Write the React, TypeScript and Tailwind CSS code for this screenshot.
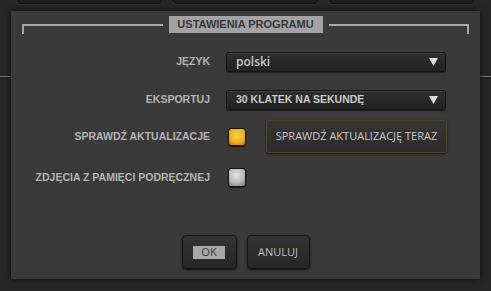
import React from 'react';

const labelCls =
    "text-right text-[10.5px] font-bold text-[#b4b4b4] [font-family:'Liberation_Sans',Arial,sans-serif] whitespace-nowrap";

const Select: React.FC<{ value: string; bold?: boolean }> = ({ value, bold }) => (
    <div className="flex h-[20px] w-[220px] items-center justify-between rounded-[3px] border border-[#141414] bg-gradient-to-b from-[#2e2e2e] to-[#232323] pl-[9px] pr-[7px] shadow-[inset_0_1px_0_rgba(255,255,255,0.08),0_1px_1px_rgba(0,0,0,0.5)]">
        <span className={`text-[#c8c8c8] ${bold ? 'text-[10.5px] font-bold [font-family:Liberation_Sans,Arial,sans-serif]' : 'text-[12px] font-semibold'}`}>{value}</span>
        <svg width="9" height="8" viewBox="0 0 9 8">
            <path d="M0 0 H9 L4.5 8 Z" fill="#dcdcdc" />
        </svg>
    </div>
);

export default function App() {
    return (
        <div className="relative h-[291px] w-[491px] overflow-hidden bg-[#262626] [font-family:'Open_Sans','Liberation_Sans',sans-serif]">
            {/* line running behind the dialog */}
            <div className="absolute left-0 right-0 top-[76px] h-[1px] bg-[#7a7a7a]" />
            <div className="absolute left-0 right-0 top-[77px] h-[1px] bg-[#151515]" />

            {/* top toolbar buttons (cut off) */}
            <div className="relative flex gap-[11px] pl-[17px]">
                {[0, 1, 2].map((i) => (
                    <div
                        key={i}
                        className="mt-[-12px] h-[16px] w-[145px] rounded-b-[4px] border border-[#111] bg-[#1f1f1f] shadow-[0_1px_0_rgba(255,255,255,0.06)]"
                    />
                ))}
            </div>

            {/* dialog panel */}
            <div className="relative ml-[11px] mt-[7px] flex h-[268px] w-[469px] flex-col bg-[#3a3a3a] shadow-[0_0_6px_rgba(0,0,0,0.7)]">
                {/* fieldset title */}
                <div className="mx-[11px] mt-[5px] flex h-[17px] items-start gap-[6px]">
                    <div className="mt-[8px] h-[10px] flex-1 border-l-2 border-t-2 border-[#a8a8a8]" />
                    <div className="flex h-[17px] w-[154px] items-center justify-center bg-[#a3a3a3] text-[11px] font-bold text-[#383838] [font-family:'Liberation_Sans',Arial,sans-serif]">
                        USTAWIENIA PROGRAMU
                    </div>
                    <div className="mt-[8px] h-[10px] flex-1 border-r-2 border-t-2 border-[#a8a8a8]" />
                </div>

                {/* settings rows */}
                <div className="mt-[19px] grid grid-cols-[199px_auto] gap-x-[16px]">
                    <div className={`${labelCls} self-center`}>JĘZYK</div>
                    <Select value="polski" />

                    <div className={`${labelCls} mt-[18px] self-center`}>EKSPORTUJ</div>
                    <div className="mt-[18px]">
                        <Select value="30 KLATEK NA SEKUNDĘ" bold />
                    </div>

                    <div className={`${labelCls} mt-[10px] self-center`}>SPRAWDŹ AKTUALIZACJE</div>
                    <div className="mt-[10px] flex items-center">
                        <div className="ml-[2px] h-[18px] w-[18px] rounded-[3px] border border-[#1a1205] bg-[radial-gradient(circle_at_50%_40%,#ffd040,#f0b020_55%,#c07a10)] shadow-[0_1px_1px_rgba(0,0,0,0.6)]" />
                        <button className="ml-[20px] flex h-[33px] w-[181px] items-center justify-center rounded-[3px] border border-[#4e4528] bg-gradient-to-b from-[#363636] to-[#2b2b2b] text-[11px] text-[#c8c8c8] shadow-[0_1px_2px_rgba(0,0,0,0.7)]">
                            SPRAWDŹ AKTUALIZACJĘ TERAZ
                        </button>
                    </div>

                    <div className={`${labelCls} mt-[15px] self-center`}>ZDJĘCIA Z PAMIĘCI PODRĘCZNEJ</div>
                    <div className="mt-[15px] flex items-center">
                        <div className="ml-[2px] h-[19px] w-[18px] rounded-[3px] border border-[#141414] bg-[radial-gradient(circle_at_45%_35%,#e6e6e6,#b8b8b8_55%,#7a7a7a)] shadow-[0_1px_1px_rgba(0,0,0,0.6)]" />
                    </div>
                </div>

                {/* dialog buttons */}
                <div className="mt-auto mb-[10px] flex justify-center gap-[10px]">
                    <button className="flex h-[34px] w-[55px] items-center justify-center rounded-[4px] border border-[#141414] bg-gradient-to-b from-[#333] to-[#272727] shadow-[0_1px_2px_rgba(0,0,0,0.7)]">
                        <span className="flex h-[13px] w-[32px] items-center justify-center bg-[#a8a8a8] text-[11px] text-[#3a3a3a]">OK</span>
                    </button>
                    <button className="flex h-[34px] w-[63px] items-center justify-center rounded-[4px] border border-[#141414] bg-gradient-to-b from-[#333] to-[#272727] text-[11px] text-[#bdbdbd] shadow-[0_1px_2px_rgba(0,0,0,0.7)]">
                        ANULUJ
                    </button>
                </div>
            </div>
        </div>
    );
}
